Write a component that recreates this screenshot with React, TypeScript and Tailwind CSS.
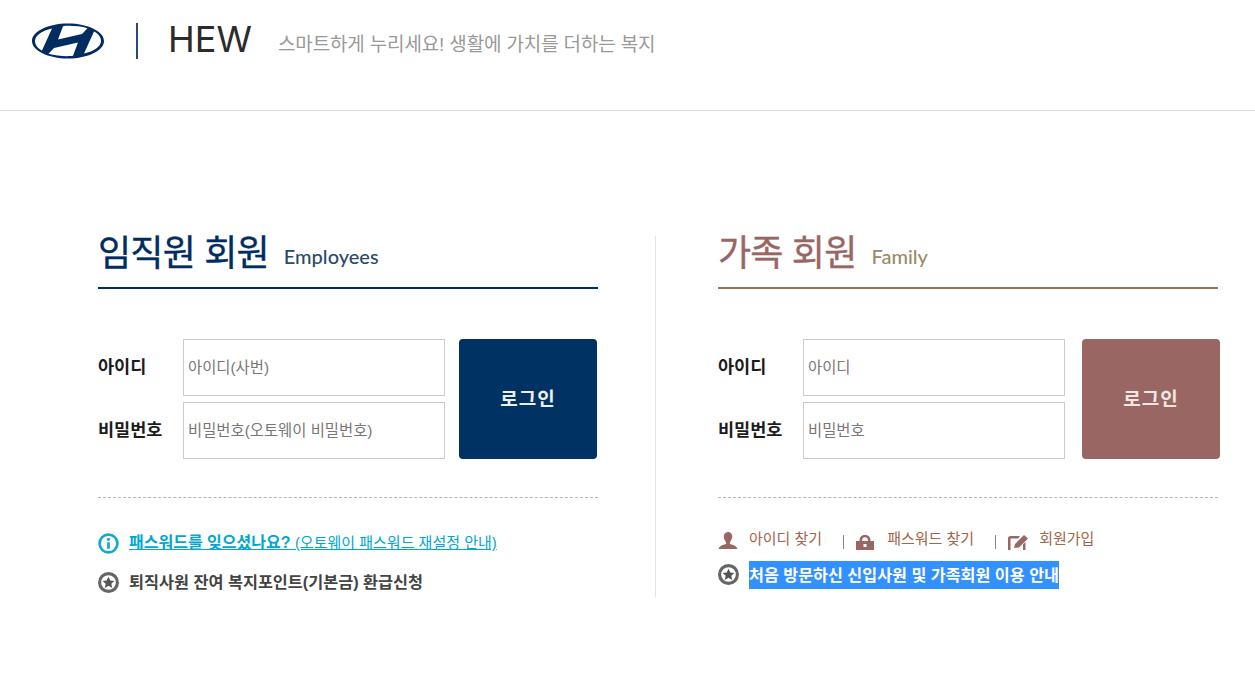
const sans = '"Liberation Sans", "Noto Sans CJK KR", sans-serif'

function HyundaiLogo() {
  return (
    <svg width="72" height="36" viewBox="0 0 72 36" className="block">
      <path
        fillRule="evenodd"
        fill="#002c5f"
        d="M36 0.500C16 0.500 0 8.500 0 18s16 17.500 36 17.500S72 27.500 72 18 56 0.500 36 0.500ZM20 5.500C10 7.500 3 12.500 3 18c0 4 3 7.500 7 9.500ZM52 30.500C62 28.500 69 23.500 69 18c0-4-3-7.500-7-9.500ZM31 3.200C36 2.500 48 2.800 55.500 5.300L50 11 26 16.500ZM41 32.800C36 33.500 24 33.200 16.500 30.700L22 25 46 19.500Z"
      />
    </svg>
  )
}

function StarBadge() {
  return (
    <svg width="21" height="21" viewBox="0 0 20 20" className="block shrink-0">
      <circle cx="10" cy="10" r="8.500" fill="none" stroke="#666" strokeWidth="3" />
      <path fill="#555" d="M10 4.500l1.700 3.600 3.900.5-2.900 2.700.8 3.900-3.500-2-3.500 2 .8-3.900-2.900-2.700 3.900-.5Z" />
    </svg>
  )
}

function InfoBadge() {
  return (
    <svg width="21" height="21" viewBox="0 0 20 20" className="block shrink-0">
      <circle cx="10" cy="10" r="8.500" fill="none" stroke="#12a9cf" strokeWidth="2.500" />
      <rect x="8.700" y="4.800" width="2.600" height="2.600" fill="#12a9cf" />
      <rect x="8.700" y="8.800" width="2.600" height="6.200" fill="#12a9cf" />
    </svg>
  )
}

function Field({ label, placeholder }: { label: string; placeholder: string }) {
  return (
    <div className="flex items-center">
      <span className="w-[85px] text-[17.500px] font-bold text-[#1c1c1c]">{label}</span>
      <div className="flex h-[57px] w-[262px] items-center border border-[#cccccc] bg-white pl-[4px] text-[15.400px] text-[#777777]">
        {placeholder}
      </div>
    </div>
  )
}

function Panel({ title, sub, titleColor, subColor, lineColor, btnColor, idHint, pwHint, btnClass, children }: {
  title: string
  sub: string
  titleColor: string
  subColor: string
  lineColor: string
  btnColor: string
  idHint: string
  pwHint: string
  btnClass: string
  children: React.ReactNode
}) {
  return (
    <section className="w-[500px]">
      <div className={`flex h-[53px] items-end border-b-2 pb-[13px] ${lineColor}`}>
        <h2 className={`text-[36px] font-normal leading-[40px] tracking-[-0.8px] [-webkit-text-stroke:0.35px_currentColor] ${titleColor}`}>{title}</h2>
        <span className={`mb-[5px] ml-[15px] text-[20px] font-medium leading-[26px] ${subColor}`} style={{ fontFamily: 'Lato, sans-serif' }}>{sub}</span>
      </div>
      <div className="mt-[50px] flex">
        <div className="flex shrink-0 flex-col gap-[6px]">
          <Field label="아이디" placeholder={idHint} />
          <Field label="비밀번호" placeholder={pwHint} />
        </div>
        <button className={`h-[120px] w-[138px] shrink-0 rounded-[4px] pt-[2px] text-[19px] font-bold tracking-[1px] ${btnColor} ${btnClass}`}>로그인</button>
      </div>
      <div className="mt-[38px] border-t border-dashed border-[#b5b5b5]" />
      {children}
    </section>
  )
}

export default function App() {
  return (
    <div className="min-h-[692px] bg-white" style={{ fontFamily: sans }}>
      <header className="flex h-[111px] items-start border-b border-[#dddddd] pl-[32px] pt-[23px]">
        <HyundaiLogo />
        <div className="ml-[32px] h-[36px] w-[2px] bg-[#2a4a7a]" />
        <span className="ml-[30px] w-[85px] text-[36px] leading-[33px] text-[#2b2b2b]" style={{ fontFamily: 'Inter, sans-serif', fontWeight: 400 }}>HEW</span>
        <span className="ml-[25px] mt-[9px] text-[19px] leading-[26px] tracking-[-0.15px] text-[#999999]">스마트하게 누리세요! 생활에 가치를 더하는 복지</span>
      </header>

      <main className="mt-[125px] flex pl-[98px]">
        <Panel title="임직원 회원" sub="Employees" titleColor="text-[#002c5f]" subColor="text-[#2a4a6b]" lineColor="border-[#002c5f]" btnColor="bg-[#003263]" btnClass="ml-[14px] text-[#eeeeee]" idHint="아이디(사번)" pwHint="비밀번호(오토웨이 비밀번호)">
          <div className="mt-[33px] flex items-center">
            <InfoBadge />
            <a className="ml-[10px] text-[16px] font-bold text-[#00a7d0] underline">패스워드를 잊으셨나요? <span className="text-[15px] font-normal">(오토웨이 패스워드 재설정 안내)</span></a>
          </div>
          <div className="mt-[15px] flex items-center">
            <StarBadge />
            <span className="ml-[10px] text-[16.300px] font-bold text-[#444444]">퇴직사원 잔여 복지포인트(기본금) 환급신청</span>
          </div>
        </Panel>

        <div className="ml-[57px] mr-[62px] h-[361px] w-[1px] bg-[#e2e2e2]" />

        <Panel title="가족 회원" sub="Family" titleColor="text-[#996664]" subColor="text-[#9c8a6a]" lineColor="border-[#a46e52]" btnColor="bg-[#996664]" btnClass="ml-[17px] text-[#f2e6e4]" idHint="아이디" pwHint="비밀번호">
          <div className="mt-[30px] flex items-center text-[15px] text-[#a0664a]">
            <svg width="20" height="17" viewBox="0 0 20 18" className="mt-[2px] shrink-0"><path fill="#996664" d="M10 0c3 0 4.500 2.500 4.500 5S12.500 10 12 11v1.500c2 1.200 7 1.500 8 5.500H0c1-4 6-4.300 8-5.500V11C7.500 10 5.500 7.500 5.500 5S7 0 10 0Z" /></svg>
            <span className="ml-[11px]">아이디 찾기</span>
            <span className="ml-[21px] mt-[6px] h-[14px] w-[1px] bg-[#888888]" />
            <svg width="18" height="15" viewBox="0 0 18 15" className="ml-[12px] mt-[6px] shrink-0"><path fillRule="evenodd" fill="#996664" d="M9 0c4 0 5.500 2.500 5.500 6H18v9H0V6h3.500C3.500 2.500 5 0 9 0Zm0 2.200C7 2.200 6 3.500 6 6h6C12 3.500 11 2.200 9 2.200ZM7.500 9v3h3V9Z" /></svg>
            <span className="ml-[13px]">패스워드 찾기</span>
            <span className="ml-[21px] mt-[6px] h-[14px] w-[1px] bg-[#888888]" />
            <svg width="20" height="15" viewBox="0 0 20 15" className="ml-[12px] mt-[6px] shrink-0"><path fill="#996664" d="M0 3.500A2.500 2.500 0 0 1 2.500 1H12l-2 2.500H2.500V15H0ZM6 13l1-4L16 0l4 3.500-9 9ZM15 15V9.500l2.500-2.500V15Z" /></svg>
            <span className="ml-[11px]">회원가입</span>
          </div>
          <div className="mt-[10px] flex items-center">
            <StarBadge />
            <span className="ml-[10px] bg-[#3390ff] text-[16.200px] font-bold leading-[28px] text-white">처음 방문하신 신입사원 및 가족회원 이용 안내</span>
          </div>
        </Panel>
      </main>
    </div>
  )
}
